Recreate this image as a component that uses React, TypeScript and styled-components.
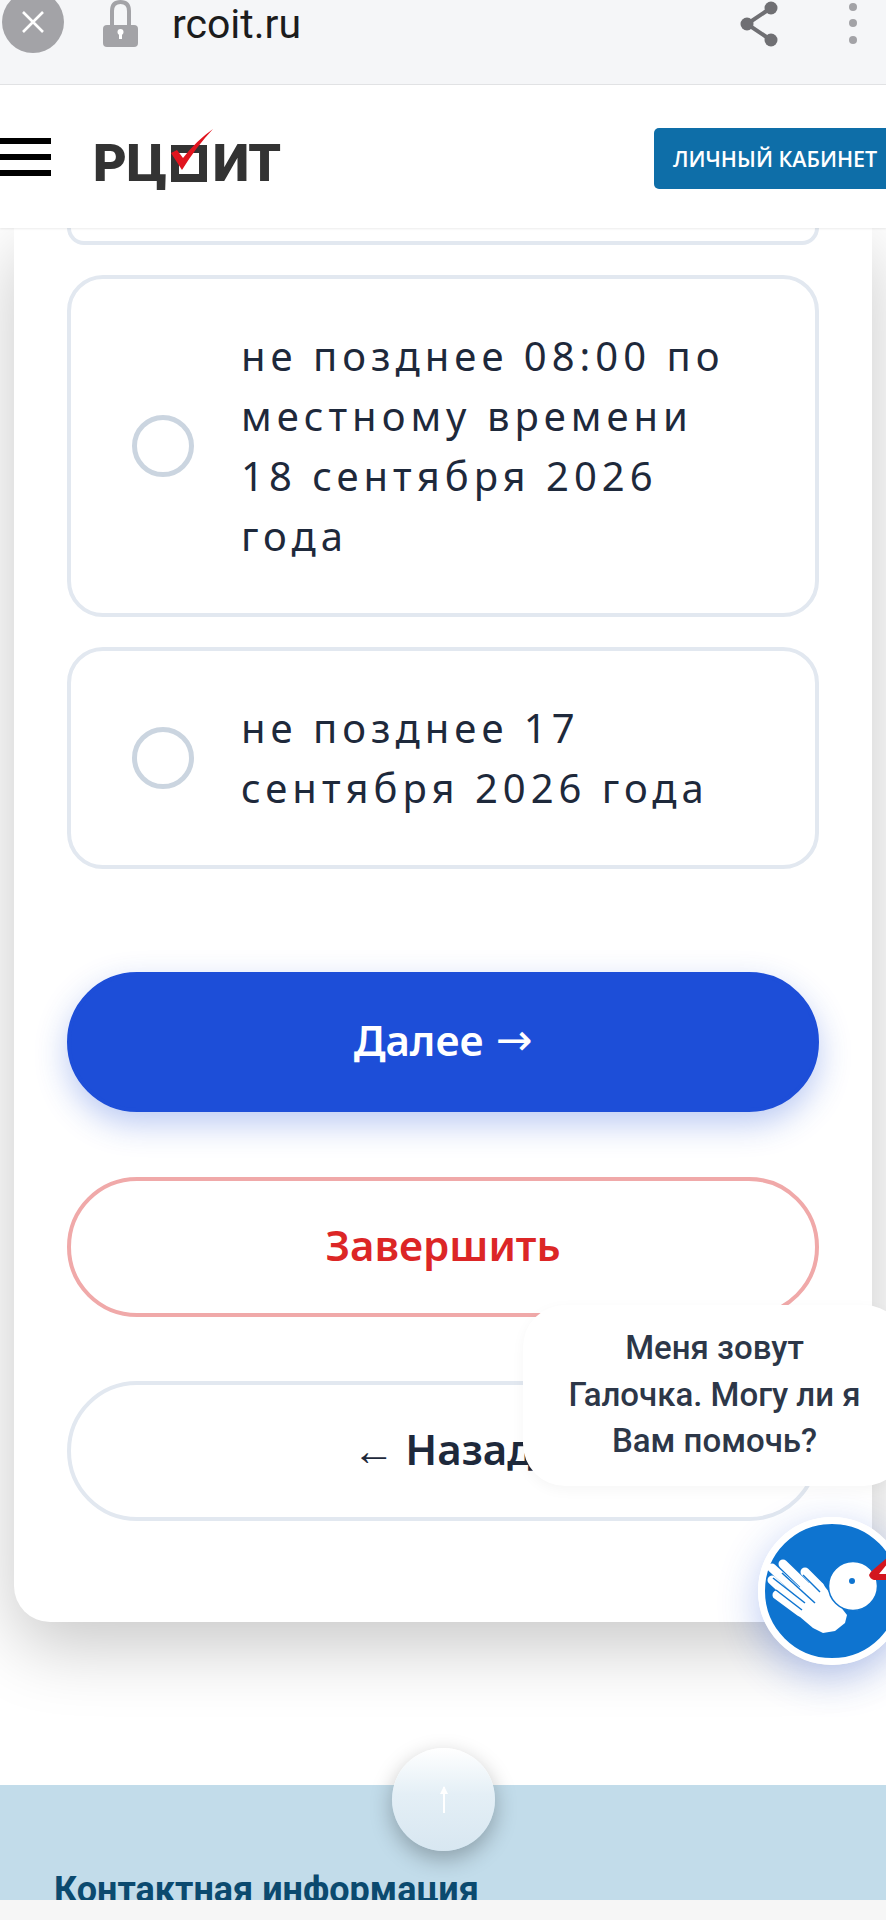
import React from "react";
import styled, {createGlobalStyle} from "styled-components";

const GlobalStyle = createGlobalStyle`
  html, body {
    margin: 0;
    padding: 0;
    background: #fff;
  }
`

const Page = styled.div`
  position: relative;
  width: 886px;
  height: 1920px;
  overflow: hidden;
  display: flex;
  flex-direction: column;
  background: #fff;
  font-family: 'Noto Sans', sans-serif;
`

const BrowserBar = styled.div`
  display: flex;
  align-items: flex-start;
  flex: 0 0 85px;
  box-sizing: border-box;
  padding-left: 2px;
  padding-right: 29px;
  background: #f5f6f8;
  border-bottom: 1px solid #e2e3e5;
`

const CloseButton = styled.div`
  flex: 0 0 62px;
  height: 62px;
  margin-top: -9px;
  border-radius: 50%;
  background: #a3a3a7;
  display: flex;
  align-items: center;
  justify-content: center;
`

const LockIcon = styled.svg`
  margin-left: 39px;
  flex: none;
`

const Url = styled.div`
  margin-left: 34px;
  font-family: Roboto, sans-serif;
  font-size: 41px;
  line-height: 48px;
  color: #1c1c1c;
`

const ShareIcon = styled.svg`
  margin-left: auto;
  flex: none;
`

const DotsIcon = styled.svg`
  margin-left: 69px;
  flex: none;
`

const Header = styled.header`
  position: relative;
  z-index: 3;
  flex: 0 0 143px;
  display: flex;
  align-items: center;
  background: #fff;
  box-shadow: 0 1px 2px rgba(0, 0, 0, 0.08);
`

const Burger = styled.div`
  flex: 0 0 51px;
  height: 38px;
  display: flex;
  flex-direction: column;
  justify-content: space-between;
`

const BurgerBar = styled.span`
  height: 6px;
  background: #000;
`

const Logo = styled.div`
  position: relative;
  margin-left: 42px;
  margin-top: 14px;
  display: flex;
  align-items: flex-start;
  font-family: Roboto, sans-serif;
  font-size: 52px;
  font-weight: 900;
  line-height: 37px;
  color: #333;
`

const LogoBox = styled.span`
  box-sizing: border-box;
  width: 36px;
  height: 37px;
  margin: 0 6px 0 4px;
  border: 8px solid #333;
`

const LogoTick = styled.svg`
  position: absolute;
  left: 78px;
  top: -16px;
`

const CabinetButton = styled.div`
  margin-left: auto;
  margin-top: 4px;
  flex: 0 0 232px;
  height: 61px;
  box-sizing: border-box;
  padding-left: 19px;
  display: flex;
  align-items: center;
  background: #0e6ea8;
  border-radius: 5px 0 0 5px;
  font-family: 'Open Sans', sans-serif;
  font-size: 21.5px;
  font-weight: 600;
  color: #fff;
  white-space: nowrap;
`

const Main = styled.main`
  flex: 0 0 auto;
  padding: 0 14px 163px;
`

const Card = styled.section`
  display: flex;
  flex-direction: column;
  padding: 0 53px 101px;
  background: #fff;
  border-radius: 0 0 36px 36px;
  box-shadow: 0 24px 70px rgba(0, 0, 0, 0.22);
`

const OptionStub = styled.div`
  height: 17px;
  box-sizing: border-box;
  margin-bottom: 30px;
  border: 4px solid #e2e8f0;
  border-top: 0;
  border-radius: 0 0 36px 36px;
`

const Option = styled.div`
  display: flex;
  align-items: center;
  gap: 47px;
  margin-bottom: 30px;
  padding: 47px 30px 47px 61px;
  border: 4px solid #e2e8f0;
  border-radius: 36px;
`

const Radio = styled.span`
  flex: 0 0 62px;
  height: 62px;
  box-sizing: border-box;
  border: 5px solid #cbd5e0;
  border-radius: 50%;
`

const OptionText = styled.div`
  font-size: 40px;
  font-weight: 450;
  line-height: 60px;
  letter-spacing: 5px;
  color: #1e293b;
  white-space: nowrap;
`

const buttonColors = {
  primary: 'background: #1d4ed8; border-color: #1d4ed8; color: #fff; box-shadow: 0 12px 32px rgba(29, 78, 216, 0.3);',
  danger: 'background: #fff; border-color: #f0a9a9; color: #dc2626;',
  plain: 'background: #fff; border-color: #e2e8f0; color: #1e293b;',
}

const ActionButton = styled.div<{$kind: keyof typeof buttonColors}>`
  height: 140px;
  box-sizing: border-box;
  padding-bottom: 5px;
  display: flex;
  align-items: center;
  justify-content: center;
  gap: 12px;
  border: 4px solid;
  border-radius: 70px;
  font-size: 42px;
  font-weight: 600;
  ${props => buttonColors[props.$kind]}
  & + & {
    margin-top: 64.5px;
  }
`

const ArrowGlyph = styled.span`
  font-family: 'DejaVu Sans', sans-serif;
  font-size: 44px;
  font-weight: 400;
`

const ButtonGroup = styled.div`
  margin-top: 73px;
`

const Footer = styled.footer`
  position: relative;
  flex: 0 0 115px;
  height: 115px;
  background: #c2dcea;
`

const FooterClip = styled.div`
  height: 115px;
  overflow: hidden;
  padding-left: 54px;
`

const FooterTitle = styled.h2`
  margin: 83px 0 0;
  font-family: Roboto, sans-serif;
  font-size: 36px;
  font-weight: 700;
  line-height: 44px;
  color: #0b4a6f;
  white-space: nowrap;
`

const UpButton = styled.div`
  position: absolute;
  left: 392px;
  top: -37px;
  width: 103px;
  height: 103px;
  display: flex;
  align-items: center;
  justify-content: center;
  border-radius: 50%;
  background: linear-gradient(180deg, #fff 0%, #e4eff6 45%, #d8e7f1 100%);
  box-shadow: 0 8px 22px rgba(0, 0, 0, 0.28);
`

const BottomStrip = styled.div`
  flex: 1;
  background: #f6f6f6;
`

const Bubble = styled.div`
  position: absolute;
  z-index: 4;
  left: 523px;
  top: 1305px;
  width: 383px;
  height: 181px;
  box-sizing: border-box;
  padding-top: 20px;
  background: #fff;
  border-radius: 42px;
  box-shadow: 0 4px 14px rgba(0, 0, 0, 0.04);
  font-family: Roboto, sans-serif;
  font-size: 33px;
  font-weight: 500;
  line-height: 46.5px;
  color: #2d3748;
  text-align: center;
`

const Avatar = styled.svg`
  position: absolute;
  z-index: 4;
  left: 758px;
  top: 1517px;
  border-radius: 50%;
  overflow: visible;
  box-shadow: 0 12px 40px rgba(29, 78, 216, 0.3);
`

export default function App() {
  return (
    <Page>
      <GlobalStyle/>
      <BrowserBar>
        <CloseButton>
          <svg width="24" height="24" viewBox="0 0 24 24">
            <path d="M2 2 L22 22 M22 2 L2 22" stroke="#fff" strokeWidth="2.6" fill="none"/>
          </svg>
        </CloseButton>
        <LockIcon width="35" height="48" viewBox="0 0 35 48">
          <path d="M9 27 V11 C9 4 13 2 17.5 2 C22 2 26 4 26 11 V27" stroke="#a3a3a7" strokeWidth="4" fill="none"/>
          <rect x="0" y="25" width="35" height="22" rx="4" fill="#a3a3a7"/>
          <circle cx="17.5" cy="32" r="3" fill="#fff"/>
          <rect x="16" y="33" width="3" height="6" fill="#fff"/>
        </LockIcon>
        <Url>rcoit.ru</Url>
        <ShareIcon width="40" height="48" viewBox="0 0 40 48">
          <path d="M31 8 L7 24 L31 40" stroke="#6f6f73" strokeWidth="4" fill="none"/>
          <circle cx="31" cy="8" r="6.5" fill="#6f6f73"/>
          <circle cx="7" cy="24" r="6.5" fill="#6f6f73"/>
          <circle cx="31" cy="40" r="6.5" fill="#6f6f73"/>
        </ShareIcon>
        <DotsIcon width="8" height="48" viewBox="0 0 8 48">
          <circle cx="4" cy="7" r="4" fill="#a3a3a7"/>
          <circle cx="4" cy="23" r="4" fill="#a3a3a7"/>
          <circle cx="4" cy="40" r="4" fill="#a3a3a7"/>
        </DotsIcon>
      </BrowserBar>
      <Header>
        <Burger>
          <BurgerBar/>
          <BurgerBar/>
          <BurgerBar/>
        </Burger>
        <Logo>
          <span>РЦ</span>
          <LogoBox/>
          <span>ИТ</span>
          <LogoTick width="44" height="44" viewBox="0 0 44 44">
            <path d="M0 24 L6 21 L12 29 Q25 12 42 0 Q25 18 11 41 Z" fill="#e0141e"/>
          </LogoTick>
        </Logo>
        <CabinetButton>ЛИЧНЫЙ КАБИНЕТ</CabinetButton>
      </Header>
      <Main>
        <Card>
          <OptionStub/>
          <Option>
            <Radio/>
            <OptionText>
              не позднее 08:00 по<br/>
              местному времени<br/>
              18 сентября 2026<br/>
              года
            </OptionText>
          </Option>
          <Option>
            <Radio/>
            <OptionText>
              не позднее 17<br/>
              сентября 2026 года
            </OptionText>
          </Option>
          <ButtonGroup>
            <ActionButton $kind="primary">Далее <ArrowGlyph>→</ArrowGlyph></ActionButton>
            <ActionButton $kind="danger">Завершить</ActionButton>
            <ActionButton $kind="plain">← Назад</ActionButton>
          </ButtonGroup>
        </Card>
      </Main>
      <Footer>
        <FooterClip>
          <FooterTitle>Контактная информация</FooterTitle>
        </FooterClip>
        <UpButton>
          <svg width="16" height="30" viewBox="0 0 16 30">
            <path d="M8 2 V28" stroke="#fff" strokeWidth="2" fill="none"/>
            <path d="M8 1 L12 9 H4 Z" fill="#fff"/>
          </svg>
        </UpButton>
      </Footer>
      <BottomStrip/>
      <Bubble>
        Меня зовут<br/>
        Галочка. Могу ли я<br/>
        Вам помочь?
      </Bubble>
      <Avatar width="148" height="148" viewBox="0 0 148 148">
        <circle cx="74" cy="74" r="70.5" fill="#0e74d0" stroke="#fff" strokeWidth="7"/>
        <path d="M45 66 L64 66 L89 98 L87 106 L77 114 L65 116 L55 111 L22 83 L35 80 Z" fill="#fff"/>
        <g stroke="#fff" strokeWidth="9" strokeLinecap="round" fill="none">
          <path d="M47 55 L62 70"/>
          <path d="M25 47 L57 78"/>
          <path d="M14 51 L49 83"/>
          <path d="M14 63 L44 91"/>
          <path d="M19 78 L42 95"/>
        </g>
        <g stroke="#0e74d0" strokeWidth="1.5" fill="none">
          <path d="M45 58 L62 75"/>
          <path d="M24 56 L57 86"/>
          <path d="M15 61 L47 86"/>
          <path d="M18 73 L44 93"/>
        </g>
        <circle cx="95" cy="69" r="24.5" fill="#fff" stroke="#0e74d0" strokeWidth="1.5"/>
        <circle cx="94" cy="64" r="3" fill="#0e74d0"/>
        <path d="M111 58 Q112 55 116 52 L130 40 V63 L116 63 Q112 62 111 58 Z" fill="#d3161f"/>
        <path d="M121 57 L130 46 V57 Z" fill="#fff"/>
      </Avatar>
    </Page>
  )
}
